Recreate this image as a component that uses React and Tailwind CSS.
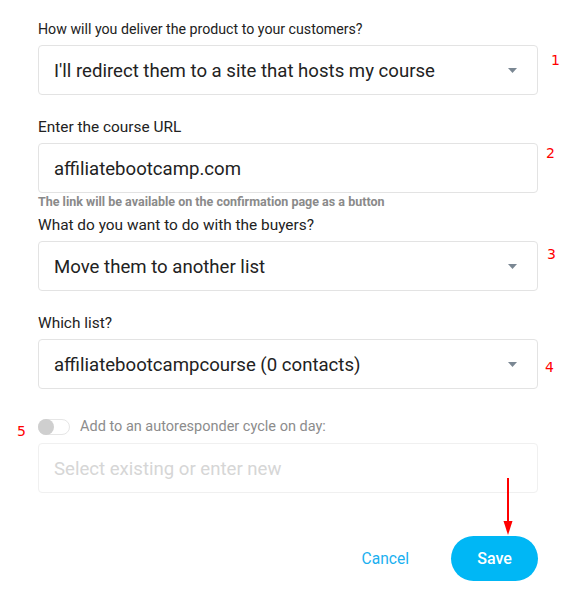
export default function App() {
  const Caret = () => (
    <svg width="9" height="5" viewBox="0 0 9 5" className="shrink-0">
      <path d="M0 0 L9 0 L4.5 5 Z" fill="#7a8793" />
    </svg>
  );

  const Num = ({ n, className }) => (
    <span
      className={`absolute text-[14px] leading-none text-[#ff0000] ${className}`}
      style={{ fontFamily: '"DejaVu Sans", sans-serif' }}
    >
      {n}
    </span>
  );

  return (
    <div className="relative w-[568px] h-[590px] bg-white font-['Roboto',sans-serif]">
      <div className="pl-[38px] pt-[19px] w-[538px]">
        {/* Delivery */}
        <p className="text-[14.2px] leading-[20px] text-[#222]">How will you deliver the product to your customers?</p>
        <div className="relative mt-[6px] h-[50px] border border-[#e3e3e3] rounded-[4px] flex items-center justify-between pl-[15px] pr-[20px]">
          <span className="pt-[3px] text-[18.6px] text-[#222]">I'll redirect them to a site that hosts my course</span>
          <Caret />
          <Num n="1" className="left-[512px] top-[7px]" />
        </div>

        {/* URL */}
        <p className="mt-[22px] text-[15.4px] leading-[20px] text-[#222]">Enter the course URL</p>
        <div className="relative mt-[6px] h-[50px] border border-[#e3e3e3] rounded-[4px] flex items-center pl-[15px]">
          <span className="pt-[3px] text-[18.6px] text-[#222]">affiliatebootcamp.com</span>
          <Num n="2" className="left-[507px] top-[2px]" />
        </div>
        <p className="mt-[2px] text-[12.5px] leading-[14px] font-bold text-[#8a8a8a]">The link will be available on the confirmation page as a button</p>

        {/* Buyers */}
        <p className="mt-[6px] text-[15.4px] leading-[20px] text-[#222]">What do you want to do with the buyers?</p>
        <div className="relative mt-[6px] h-[50px] border border-[#e3e3e3] rounded-[4px] flex items-center justify-between pl-[15px] pr-[20px]">
          <span className="pt-[3px] text-[18.6px] text-[#222]">Move them to another list</span>
          <Caret />
          <Num n="3" className="left-[508px] top-[5px]" />
        </div>

        {/* List */}
        <p className="mt-[22px] text-[15.4px] leading-[20px] text-[#222]">Which list?</p>
        <div className="relative mt-[6px] h-[50px] border border-[#e3e3e3] rounded-[4px] flex items-center justify-between pl-[15px] pr-[20px]">
          <span className="pt-[3px] text-[18.6px] text-[#222]">affiliatebootcampcourse (0 contacts)</span>
          <Caret />
          <Num n="4" className="left-[506px] top-[20px]" />
        </div>

        {/* Autoresponder */}
        <div className="relative mt-[30px] flex items-center gap-[10px] h-[16px]">
          <div className="relative w-[32px] h-[16px] rounded-full border border-[#e6e6e6] bg-white">
            <div className="absolute left-[-1px] top-[-1px] w-[16px] h-[16px] rounded-full bg-[#cfcfcf]" />
          </div>
          <span className="text-[14.5px] text-[#8c8c8c]">Add to an autoresponder cycle on day:</span>
          <Num n="5" className="left-[-21px] top-[5px]" />
        </div>
        <div className="mt-[8px] h-[50px] border border-[#f0f0f0] rounded-[4px] flex items-center pl-[15px]">
          <span className="pt-[3px] text-[18.6px] text-[#d6d6d6]">Select existing or enter new</span>
        </div>

        {/* Actions */}
        <div className="mt-[43px] flex items-center justify-end gap-[42px]">
          <button className="pt-[2px] text-[15.6px] text-[#1ab0f0]">Cancel</button>
          <button className="w-[87px] h-[45px] pt-[1px] rounded-full bg-[#00b7f5] text-white text-[16px] font-medium">Save</button>
        </div>
      </div>

      {/* red arrow annotation */}
      <svg className="absolute left-[500px] top-[477px]" width="16" height="60" viewBox="0 0 16 60">
        <line x1="8" y1="1" x2="8" y2="46" stroke="#ff0000" strokeWidth="2" />
        <path d="M3.5 44 L12.5 44 L8 58 Z" fill="#ff0000" />
      </svg>
    </div>
  );
}
